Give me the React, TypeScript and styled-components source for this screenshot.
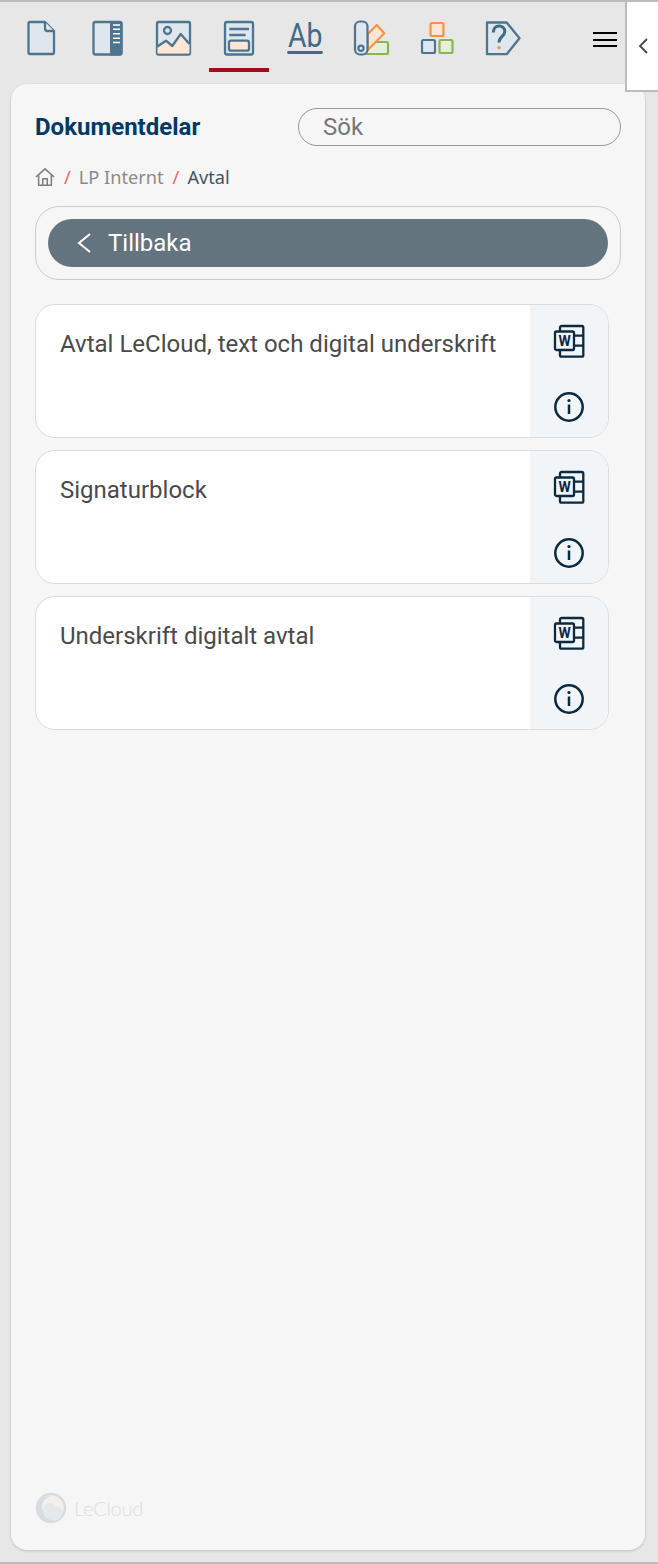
import React from "react";
import styled, { createGlobalStyle } from "styled-components";

const Global = createGlobalStyle`
  html, body { margin: 0; padding: 0; background: #e7e7e7; }
  * { box-sizing: border-box; }
  body { font-family: Roboto, "Liberation Sans", sans-serif; }
`;

const Page = styled.div`
  position: relative;
  width: 658px;
  height: 1564px;
  display: flex;
  flex-direction: column;
  background: #e7e7e7;
  border-top: 2px solid #bcbcbc;
  border-bottom: 2px solid #bcbcbc;
`;

const Toolbar = styled.header`
  height: 82px;
  flex: none;
  display: flex;
  align-items: flex-start;
  padding-left: 11px;
`;

const Tabs = styled.nav`
  display: flex;
  gap: 6px;
`;

const Tab = styled.div<{ $active?: boolean }>`
  width: 60px;
  height: 70px;
  padding-top: 16px;
  display: flex;
  justify-content: center;
  border-bottom: 4px solid ${(p) => (p.$active ? "#a20d19" : "transparent")};
`;

const TabIcon = styled.svg`
  width: 40px;
  height: 40px;
  display: block;
  overflow: visible;
`;

const Burger = styled.div`
  margin-left: auto;
  margin-right: 41px;
  margin-top: 30px;
  width: 24px;
  display: flex;
  flex-direction: column;
  gap: 4.5px;
`;

const BurgerLine = styled.span`
  display: block;
  height: 2px;
  background: #000;
`;

const Collapse = styled.div`
  position: absolute;
  top: 0;
  right: 0;
  width: 33px;
  height: 90px;
  background: #fff;
  border-left: 2px solid #bcbcbc;
  border-bottom: 2px solid #bcbcbc;
  display: flex;
  align-items: center;
  justify-content: center;
`;

const Panel = styled.main`
  flex: 1;
  margin: 0 13px 12px 11px;
  background: #f6f6f6;
  border-radius: 16px;
  box-shadow: 0 1px 3px rgba(0, 0, 0, 0.18);
  padding: 24px 24px 26px;
  display: flex;
  flex-direction: column;
`;

const Header = styled.div`
  display: flex;
  align-items: center;
  justify-content: space-between;
  height: 38px;
`;

const Title = styled.h1`
  margin: 0;
  font: 700 24px/28px Roboto, sans-serif;
  color: #003a63;
`;

const Search = styled.div`
  width: 323px;
  height: 38px;
  border: 1px solid #999;
  border-radius: 19px;
  padding-left: 24px;
  display: flex;
  align-items: center;
  font: 400 24px/28px Roboto, sans-serif;
  color: #777;
`;

const Crumbs = styled.div`
  margin-top: 20px;
  height: 22px;
  display: flex;
  align-items: center;
  font: 400 18.2px/22px "Noto Sans", "Open Sans", sans-serif;
  color: #8a8a8a;
`;

const HomeIcon = styled.svg`
  width: 20px;
  height: 20px;
  flex: none;
`;

const Sep = styled.span`
  color: #e8666b;
  margin: 0 8px 0 9px;
`;

const Current = styled.span`
  color: #3f5565;
`;

const BackWrap = styled.div`
  margin-top: 18px;
  height: 74px;
  border: 1px solid #ccc;
  border-radius: 24px;
  padding: 12px;
`;

const BackButton = styled.div`
  height: 48px;
  border-radius: 24px;
  background: #64747f;
  color: #fff;
  display: flex;
  align-items: center;
  padding-left: 28px;
  gap: 16px;
  font: 400 24px/28px Roboto, sans-serif;
`;

const Cards = styled.div`
  margin-top: 24px;
  width: 574px;
  display: flex;
  flex-direction: column;
  gap: 12px;
`;

const Card = styled.article`
  height: 134px;
  border: 1px solid #dcdcdc;
  border-radius: 20px;
  background: #fff;
  overflow: hidden;
  display: flex;
`;

const CardText = styled.div`
  flex: 1;
  padding: 24px 0 0 24px;
  font: 400 24px/30px Roboto, sans-serif;
  color: #4a4a4a;
`;

const CardSide = styled.div`
  width: 78px;
  background: #f1f5f7;
  display: flex;
  flex-direction: column;
  align-items: center;
  justify-content: space-between;
  padding: 18px 0 13px;
`;

const ActionIcon = styled.svg`
  width: 34px;
  height: 36px;
  display: block;
`;

const InfoSvg = styled.svg`
  width: 34px;
  height: 34px;
  display: block;
`;

const Footer = styled.footer`
  margin-top: auto;
  display: flex;
  align-items: center;
  gap: 7px;
  height: 32px;
`;

const LogoSvg = styled.svg`
  width: 32px;
  height: 32px;
  flex: none;
`;

const LogoText = styled.span`
  font: 300 20px/24px Lato, sans-serif;
  color: #d9dfe2;
  letter-spacing: -0.2px;
`;

const B = "#4d7590";
const BF = "#dfe7ee";
const P = "#fde6d3";
const O = "#f7933f";
const G = "#8ab552";
const GF = "#e6efda";

const Doc = () => (
  <TabIcon viewBox="0 0 40 40" fill="none" stroke={B} strokeWidth="2.300" strokeLinejoin="round">
    <path d="M9 4H24L33 13V34.500Q33 36 31.500 36H9Q7.500 36 7.500 34.500V5.500Q7.500 4 9 4Z" fill={BF} />
    <path d="M24 4V10.500Q24 13 26.500 13H33" fill="#e7e7e7" />
  </TabIcon>
);

const Sidebar = () => (
  <TabIcon viewBox="0 0 40 40" fill="none">
    <rect x="6.500" y="4" width="28" height="32.500" rx="2" fill={BF} stroke={B} strokeWidth="2.300" />
    <path d="M23 3H33.500Q35.500 3 35.500 5V35.500Q35.500 37.500 33.500 37.500H23Z" fill={B} />
    <path d="M26 7H33M26 11.300H33M26 15.800H33M26 20.200H33M26 24.500H33" stroke="#fff" strokeWidth="1.500" />
  </TabIcon>
);

const ImageI = () => (
  <TabIcon viewBox="0 0 40 40" fill="none" stroke={B} strokeWidth="2.300" strokeLinejoin="round">
    <rect x="4" y="4" width="33" height="32.500" rx="1.500" fill={BF} />
    <path d="M4.500 28.700L13 22.700L19.300 28L27.700 16L36.500 26V35.500H4.500Z" fill={P} stroke="none" />
    <path d="M4 28.700L13 22.700L19.300 28L27.700 16L36.500 26" />
    <circle cx="14.500" cy="12.500" r="3.500" fill={BF} />
  </TabIcon>
);

const Parts = () => (
  <TabIcon viewBox="0 0 40 40" fill="none" stroke={B} strokeWidth="2.300">
    <rect x="6" y="4" width="28" height="32.500" rx="2" fill={BF} />
    <path d="M10.300 11H30M10.300 17H26.700" />
    <rect x="10" y="22.700" width="20" height="10" rx="2" fill={P} />
  </TabIcon>
);

const Ab = () => (
  <TabIcon viewBox="0 0 40 40" fill="none">
    <text x="0" y="29" transform="translate(3 0) scale(0.86 1)" fill="#3f6b85" fontFamily="Roboto, sans-serif" fontWeight="400" fontSize="33">Ab</text>
    <path d="M3.500 34.500H36.500" stroke="#3f6b85" strokeWidth="2.800" strokeLinecap="round" />
  </TabIcon>
);

const Swatch = () => (
  <TabIcon viewBox="0 0 40 40" fill="none" strokeWidth="2.200" strokeLinejoin="round">
    <path d="M21 24H35.500Q37 24 37 25.500V34.500Q37 36 35.500 36H12Z" fill={GF} stroke={G} />
    <path d="M16.700 16.300L25.700 7L33.300 15.300L16.700 32Z" fill={P} stroke={O} />
    <rect x="4" y="3.500" width="12.500" height="33" rx="5" fill={BF} stroke={B} />
    <circle cx="10" cy="30.300" r="2.600" stroke={B} />
  </TabIcon>
);

const Blocks = () => (
  <TabIcon viewBox="0 0 40 40" fill="none" strokeWidth="2.200">
    <rect x="13.500" y="5" width="13" height="13" rx="1.500" fill={P} stroke={O} />
    <rect x="5" y="22" width="13" height="13" rx="1.500" fill={BF} stroke={B} />
    <rect x="22.500" y="22" width="13" height="13" rx="1.500" fill={GF} stroke={G} />
  </TabIcon>
);

const Help = () => (
  <TabIcon viewBox="0 0 40 40" fill="none" strokeLinejoin="round">
    <path d="M4 4.500H23.700L36.500 20.300L23.700 36.200H4Z" fill={BF} stroke={B} strokeWidth="2.300" />
    <path d="M10.300 14.500C10.300 5.800 21.800 6 21.800 13.500C21.800 18.500 16 18.500 16 24.500" stroke="#3f6b85" strokeWidth="3" strokeLinecap="butt" />
    <circle cx="16" cy="29.800" r="1.700" fill={O} />
  </TabIcon>
);

const Word = () => (
  <ActionIcon viewBox="0 0 34 36" fill="none" stroke="#0b2a40" strokeWidth="2.300" strokeLinejoin="round">
    <rect x="8" y="3" width="23.300" height="30.700" rx="1.500" />
    <path d="M22 12.700H31.300M22 22.700H31.300" />
    <rect x="3" y="8.500" width="19" height="18.500" rx="1.500" fill="#f1f5f7" />
    <text x="12.500" y="23" textAnchor="middle" fill="#0b2a40" stroke="none" fontFamily="Roboto, sans-serif" fontWeight="700" fontSize="14">W</text>
  </ActionIcon>
);

const Info = () => (
  <InfoSvg viewBox="0 0 34 34" fill="none" stroke="#0b2a40" strokeWidth="2.500">
    <circle cx="17" cy="17" r="13.700" />
    <path d="M17 14.500V24" />
    <circle cx="17" cy="10.500" r="1.600" fill="#0b2a40" stroke="none" />
  </InfoSvg>
);

const items = [
  "Avtal LeCloud, text och digital underskrift",
  "Signaturblock",
  "Underskrift digitalt avtal",
];

const tabs = [Doc, Sidebar, ImageI, Parts, Ab, Swatch, Blocks, Help];

export default function App() {
  return (
    <>
      <Global />
      <Page>
        <Toolbar>
          <Tabs>
            {tabs.map((Icon, i) => (
              <Tab key={i} $active={i === 3}>
                <Icon />
              </Tab>
            ))}
          </Tabs>
          <Burger>
            <BurgerLine />
            <BurgerLine />
            <BurgerLine />
          </Burger>
        </Toolbar>
        <Collapse>
          <svg width="12" height="18" viewBox="0 0 12 18" fill="none" stroke="#444" strokeWidth="1.800">
            <path d="M10 2L3 9L10 16" />
          </svg>
        </Collapse>
        <Panel>
          <Header>
            <Title>Dokumentdelar</Title>
            <Search>Sök</Search>
          </Header>
          <Crumbs>
            <HomeIcon viewBox="0 0 22 22" fill="none" stroke="#7d7d7d" strokeWidth="1.700" strokeLinejoin="round">
              <path d="M1 11L11 2L21 11M4 9V20H18V9" />
              <path d="M8.500 20V13H13.500V20" />
            </HomeIcon>
            <Sep>/</Sep>
            <span>LP Internt</span>
            <Sep>/</Sep>
            <Current>Avtal</Current>
          </Crumbs>
          <BackWrap>
            <BackButton>
              <svg width="16" height="22" viewBox="0 0 16 22" fill="none" stroke="#fff" strokeWidth="2">
                <path d="M14 2L3 11L14 20" />
              </svg>
              Tillbaka
            </BackButton>
          </BackWrap>
          <Cards>
            {items.map((t) => (
              <Card key={t}>
                <CardText>{t}</CardText>
                <CardSide>
                  <Word />
                  <Info />
                </CardSide>
              </Card>
            ))}
          </Cards>
          <Footer>
            <LogoSvg viewBox="0 0 32 32" fill="none">
              <circle cx="16" cy="16" r="14" fill="#f3efe9" stroke="#d5dde0" strokeWidth="2.500" />
              <path d="M3 16C3 8 10 3.500 16 4C9 6 6 11 7 16C8 22 13 27 20 28.500C11 31 3 25 3 16Z" fill="#d5dde0" />
              <path d="M8 20C8 15 11 11 15 11C18 11 20 13 21 15C25 15 28 17 28 21C27 25 24 28 20 28.500C13 28 8 25 8 20Z" fill="#e3e9ed" />
            </LogoSvg>
            <LogoText>LeCloud</LogoText>
          </Footer>
        </Panel>
      </Page>
    </>
  );
}
